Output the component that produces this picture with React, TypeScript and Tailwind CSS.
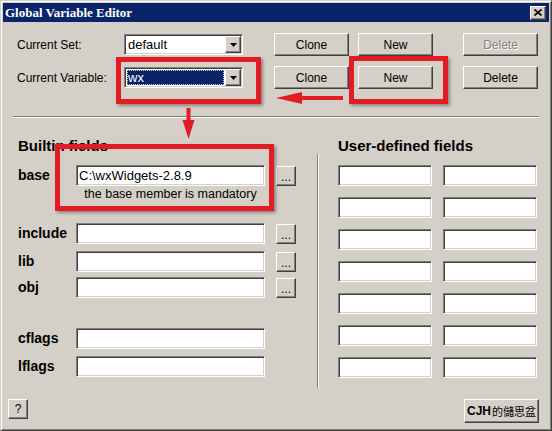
import React from 'react';

const sunken =
    'bg-white border border-t-[#808080] border-l-[#808080] border-r-white border-b-white shadow-[inset_1px_1px_0_#404040,inset_-1px_-1px_0_#d4d0c8]';
const raised =
    'bg-[#d4d0c8] border border-t-white border-l-white border-r-[#404040] border-b-[#404040] shadow-[inset_-1px_-1px_0_#808080]';

const Combo = ({ value, active }: { value: string; active?: boolean }) => (
    <div className={`${sunken} w-[119px] h-[21px] flex p-px`}>
        <div className="flex-1 flex items-stretch p-px">
            {active ? (
                <span className="flex-1 flex items-center pl-px bg-[#0a246a] text-white outline-1 outline-dotted outline-[#c8c8c8] -outline-offset-1 text-[13px]">
                    {value}
                </span>
            ) : (
                <span className="flex items-center pl-px text-[13px]">{value}</span>
            )}
        </div>
        <div className={`${raised} w-[16px] flex items-center justify-center`}>
            <svg width="7" height="4" viewBox="0 0 7 4">
                <path d="M0 0h7L3.5 4z" fill="#000" />
            </svg>
        </div>
    </div>
);

const Btn = ({
    children,
    disabled,
    className = '',
}: {
    children: React.ReactNode;
    disabled?: boolean;
    className?: string;
}) => (
    <div
        className={`${raised} w-[75px] h-[23px] flex items-center justify-center ${className} ${
            disabled ? 'text-[#808080] [text-shadow:1px_1px_0_#fff]' : ''
        }`}
    >
        {children}
    </div>
);

const Field = ({ w, value }: { w: string; value?: string }) => (
    <div className={`${sunken} ${w} h-[21px] flex items-center pl-[2px] text-[13px]`}>
        {value}
    </div>
);

const Dots = ({ className = '' }: { className?: string }) => (
    <div className={`${raised} w-[20px] h-[20px] flex items-end justify-center pb-[2px] leading-none ${className}`}>
        ...
    </div>
);

const Row = ({
    label,
    value,
    dots,
    className = '',
}: {
    label: string;
    value?: string;
    dots?: boolean;
    className?: string;
}) => (
    <div className={`flex items-center h-[21px] ${className}`}>
        <span className="w-[58px] text-[14px] font-bold">{label}</span>
        <Field w="w-[189px]" value={value} />
        {dots && <Dots className="ml-[11px]" />}
    </div>
);

export default function App() {
    return (
        <div className="relative w-[552px] h-[431px] flex flex-col p-[2px] bg-[#d4d0c8] border border-t-[#d4d0c8] border-l-[#d4d0c8] border-r-[#404040] border-b-[#404040] shadow-[inset_1px_1px_0_#fff,inset_-1px_-1px_0_#808080] text-black text-[12px] font-['Liberation_Sans',Arial,sans-serif] overflow-hidden">
            {/* title bar */}
            <div className="h-[19px] flex items-center bg-[#0a246a] pl-[2px] pr-[3px]">
                <span className="flex-1 text-white font-bold text-[13px] font-['Liberation_Serif',serif]">
                    Global Variable Editor
                </span>
                <div className={`${raised} w-[16px] h-[14px] flex items-center justify-center`}>
                    <svg width="8" height="7" viewBox="0 0 8 7">
                        <path d="M0.5 0.5L7.5 6.5M7.5 0.5L0.5 6.5" stroke="#000" strokeWidth="1.6" />
                    </svg>
                </div>
            </div>

            <div className="flex-1 flex flex-col">
                {/* current set / variable */}
                <div className="flex items-center mt-[11px] ml-[14px] h-[23px]">
                    <span className="w-[107px]">Current Set:</span>
                    <Combo value="default" />
                    <Btn className="ml-[31px]">Clone</Btn>
                    <Btn className="ml-[9px]">New</Btn>
                    <Btn className="ml-[30px]" disabled>
                        Delete
                    </Btn>
                </div>
                <div className="flex items-center mt-[10px] ml-[14px] h-[23px]">
                    <span className="w-[107px]">Current Variable:</span>
                    <Combo value="wx" active />
                    <Btn className="ml-[31px]">Clone</Btn>
                    <Btn className="ml-[9px]">New</Btn>
                    <Btn className="ml-[30px]">Delete</Btn>
                </div>
                <div className="mt-[27px] ml-[10px] w-[526px] border-t border-t-[#808080] border-b border-b-white" />

                {/* fields */}
                <div className="flex">
                    <div className="ml-[15px] w-[299px] flex flex-col">
                        <div className="mt-[19px] h-[18px] leading-[18px] text-[15px] font-bold">Builtin fields</div>
                        <Row label="base" value="C:\wxWidgets-2.8.9" dots className="mt-[10px]" />
                        <div className="ml-[58px] w-[189px] mt-px h-[14px] leading-[14px] text-center text-[12.5px]">
                            the base member is mandatory
                        </div>
                        <Row label="include" dots className="mt-[22px]" />
                        <Row label="lib" dots className="mt-[7px]" />
                        <Row label="obj" dots className="mt-[5px]" />
                        <Row label="cflags" className="mt-[30px]" />
                        <Row label="lflags" className="mt-[7px]" />
                    </div>
                    <div className="mt-[36px] h-[234px] w-[2px] border-l border-l-[#808080] border-r border-r-white" />
                    <div className="ml-[19px] flex flex-col">
                        <div className="mt-[19px] h-[18px] leading-[18px] text-[15px] font-bold">User-defined fields</div>
                        <div className="mt-[10px] grid grid-cols-[94px_94px] gap-x-[11px] gap-y-[11px]">
                            {Array.from({ length: 14 }).map((_, i) => (
                                <Field key={i} w="w-[94px]" />
                            ))}
                        </div>
                    </div>
                </div>

                {/* bottom buttons */}
                <div className="mt-auto flex justify-between items-start pl-[5px] pr-[10px] pb-[5px]">
                    <div className={`${raised} w-[20px] h-[20px] flex items-center justify-center`}>?</div>
                    <div className={`${raised} w-[75px] h-[24px] flex items-center justify-center gap-px`}>
                        <span className="font-bold text-[12px]">CJH</span>
                        <span className="text-[11px] font-['Noto_Sans_CJK_TC',sans-serif]">的儲思盆</span>
                    </div>
                </div>
            </div>

            {/* annotation overlays */}
            <div className="absolute left-[115px] top-[56px] w-[145px] h-[47px] border-[5px] border-[#e31b23] shadow-[2px_2px_3px_rgba(0,0,0,0.35)]" />
            <div className="absolute left-[348px] top-[55px] w-[99px] h-[48px] border-[5px] border-[#e31b23] shadow-[2px_2px_3px_rgba(0,0,0,0.35)]" />
            <div className="absolute left-[54px] top-[143px] w-[219px] h-[67px] border-[5px] border-[#e31b23] shadow-[2px_2px_3px_rgba(0,0,0,0.35)]" />
            <svg className="absolute left-[275px] top-[90px]" width="68" height="14" viewBox="0 0 68 14">
                <path d="M0 7L26 1V5H67V9H26V13Z" fill="#e31b23" />
            </svg>
            <svg className="absolute left-[181px] top-[107px]" width="13" height="31" viewBox="0 0 13 31">
                <path d="M4.5 0H8.5V12H12.5L6.5 31L0.5 12H4.5Z" fill="#e31b23" />
            </svg>
        </div>
    );
}
